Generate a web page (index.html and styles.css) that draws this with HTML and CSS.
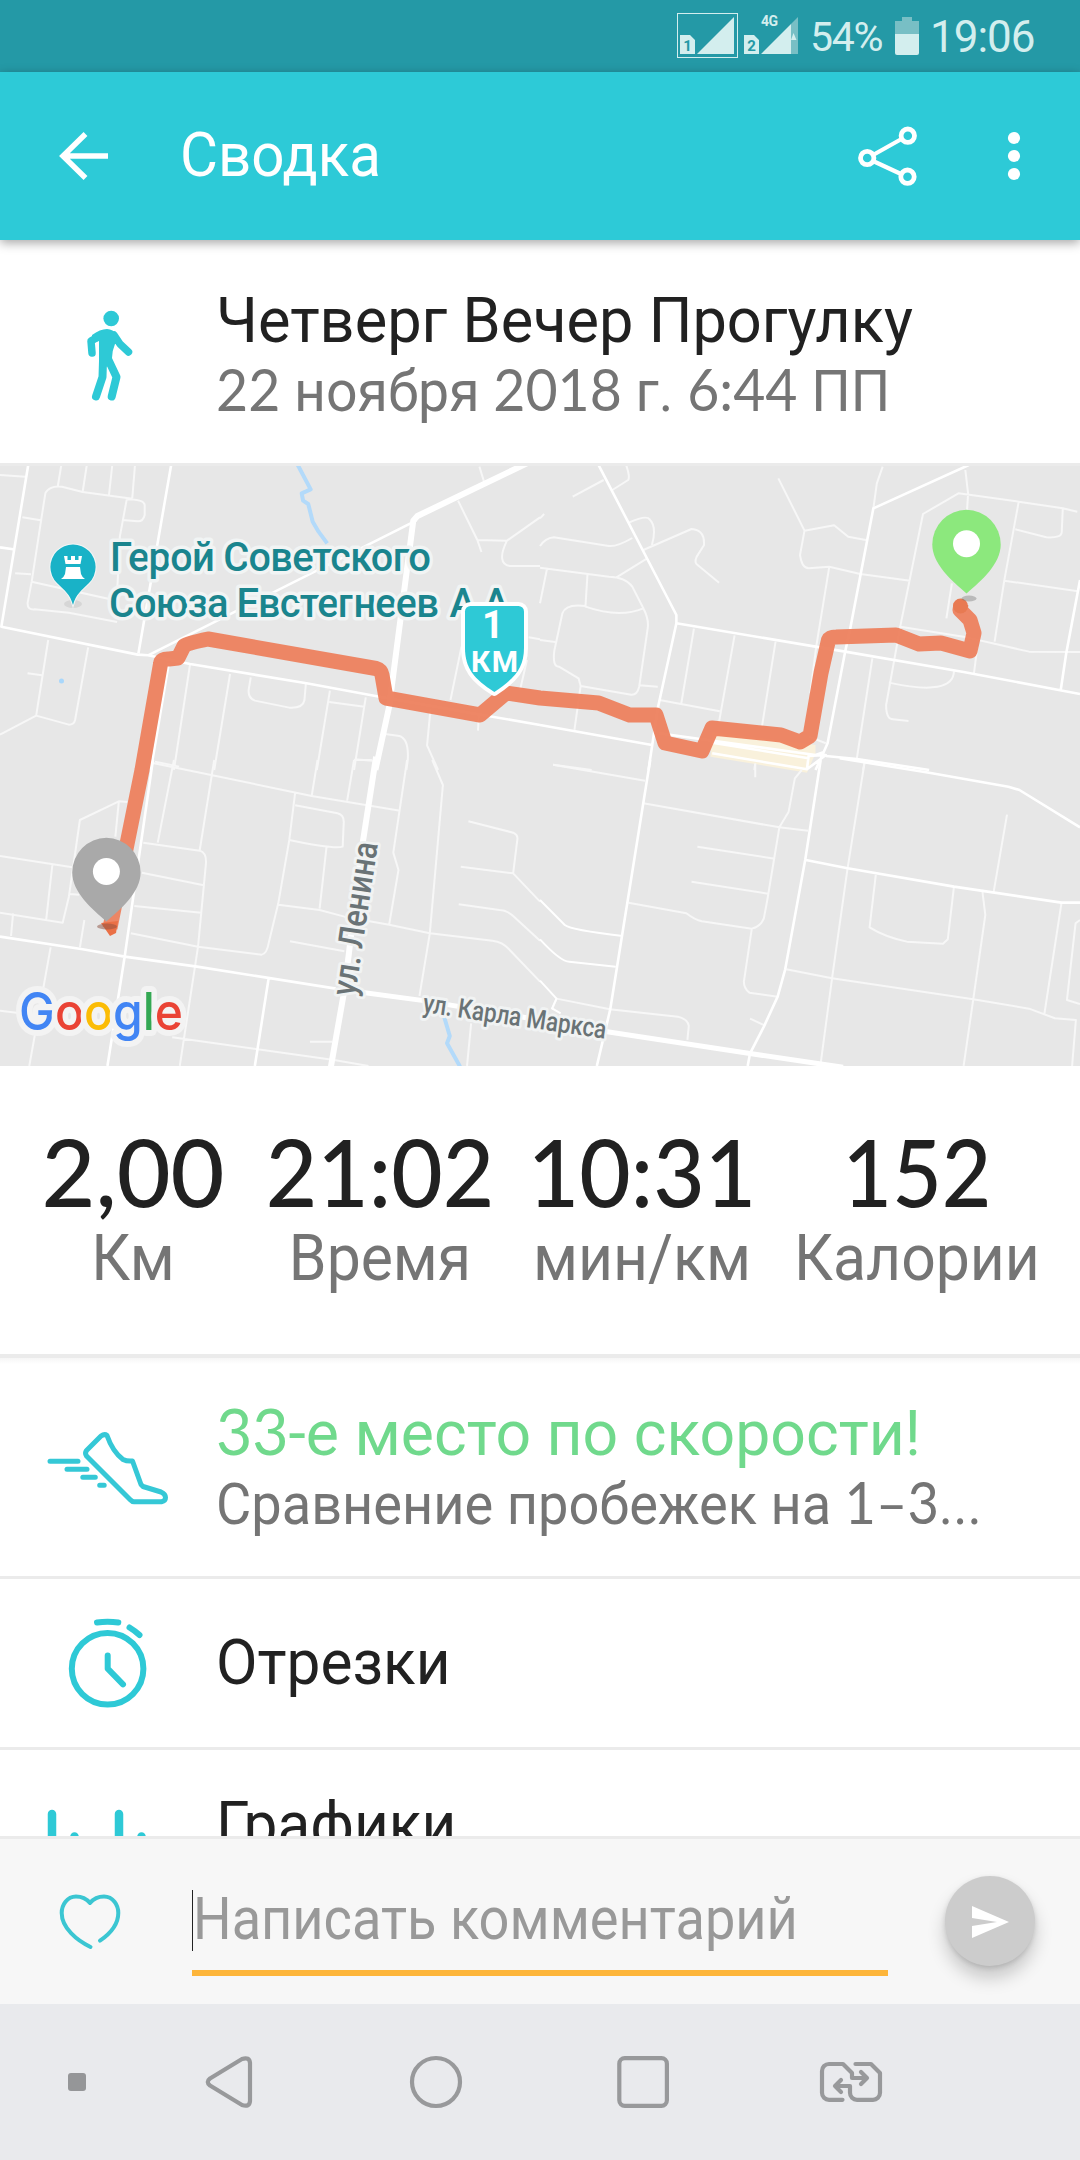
FILE: index.html
```html
<!DOCTYPE html>
<html lang="ru">
<head>
    <meta charset="UTF-8">
    <meta name="viewport" content="width=device-width, initial-scale=1.0">
    <title>Сводка</title>
    <link rel="stylesheet" href="styles.css">
</head>
<body>
    <div class="screen">
        <div class="status-bar">
            <svg class="signals" width="171" height="72" viewBox="640 0 171 72">
                <rect x="678.5" y="13.5" width="60" height="44" fill="none" stroke="#d3eeee"/>
                <path d="M681 35h10l5 5v14h-15zM698 54h37V17zM745 35h10l5 5v14h-15zM762 54h30V24z" fill="#d3eeee"/>
                <path d="M792 24l7-7v37h-7z" fill="#78bfc5"/>
                <path d="M792 40l2.500-7 3 7z" fill="#d3eeee"/>
                <text class="sim" x="688.500" y="51">1</text>
                <text class="sim" x="752.500" y="51">2</text>
                <text class="network" x="762" y="26" textLength="17">4G</text>
            </svg>
            <span class="percent">54%</span>
            <svg width="24" height="38" viewBox="0 0 24 38">
                <path d="M7 0h10v4h7v13H0V4h7z" fill="#78bfc5"/>
                <path d="M0 17h24v19a2 2 0 0 1-2 2H2a2 2 0 0 1-2-2z" fill="#d3eeee"/>
            </svg>
            <span class="clock">19:06</span>
        </div>

        <header class="app-bar">
            <svg width="182" height="168" viewBox="0 0 182 168">
                <path d="M85.500 62L63 84l22.500 22M63 84h45" fill="none" stroke="#fff" stroke-width="5.500"/>
            </svg>
            <h1>Сводка</h1>
            <svg width="240" height="168" viewBox="840 72 240 168">
                <g fill="none" stroke="#fff" stroke-width="4.800">
                    <path d="M873 155l28.500-16M873 161l28 13" stroke-width="4.200"/>
                    <circle cx="907.800" cy="135.700" r="6.700"/>
                    <circle cx="867.200" cy="158" r="6.700"/>
                    <circle cx="907.500" cy="176.700" r="6.700"/>
                </g>
                <g fill="#fff">
                    <circle cx="1014" cy="138" r="6.100"/>
                    <circle cx="1014" cy="156" r="6.100"/>
                    <circle cx="1014" cy="174" r="6.100"/>
                </g>
            </svg>
        </header>

        <main class="content">
            <section class="row summary">
                <svg class="icon" width="218" height="223" viewBox="0 0 218 223">
                    <g fill="none" stroke="#2ec9d6" stroke-width="7.500" stroke-linecap="round" stroke-linejoin="round">
                        <path d="M92 113l-1-12 12-7M114 95l6 9 8.500 8"/>
                        <path d="M103 121l-.5 16-6.500 19.500M108 119l8.500 18-4.800 19.500" stroke-width="8"/>
                    </g>
                    <path d="M92 95q8-6 15-6 6 0 10 6l4 8-6 1q-3 7-3 14l-4 8-5 2-4-5v-22l-7 2z" fill="#2ec9d6"/>
                    <circle cx="111.200" cy="78.500" r="7.800" fill="#2ec9d6"/>
                </svg>
                <div class="row-text">
                    <div class="row-title heading">Четверг Вечер Прогулку</div>
                    <div class="row-sub date"><span class="num">22</span> ноября <span class="num">2018</span> г. <span class="num">6:44</span> ПП</div>
                </div>
            </section>

            <section class="map">
                <svg width="1080" height="600" viewBox="0 0 1080 600">
                    <!-- map is cut in four tiles, each with its own coordinates -->
                    <g class="roads" transform="translate(0 -6) scale(.3444 .3333)">
                        <path class="river" d="M862 10L902 88 876 100 880 122 895 132 908 185 925 215 950 250"/>
                        <path d="M0 45L74 50M178 15L168 78M252 15L240 96M326 15L316 108M392 15L384 115M65 172L118 181M132 98Q145 76 180 80L240 96 384 116M132 98L118 190 92 365M44 340L90 343M368 118L348 230 340 400M368 118Q418 118 420 135V165Q416 184 400 184L354 180M92 365L340 422M92 365L80 430Q80 450 100 448L200 458 340 486"/>
                        <path d="M140 540L105 767 200 794Q215 794 218 780L256 562M105 767L0 824M80 640L122 646M552 612L505 930M668 642L622 930M728 652L722 690Q720 714 740 722L840 743Q880 745 884 720L888 672M958 692L920 930M956 726L1058 740M1062 712L1028 930M1030 898L1082 902M1118 822L1160 828Q1188 838 1184 900L1180 930M1250 748L1240 856 1272 930M1340 560L1308 720M1392 20L1405 64M1330 122L1386 240 1398 276M1386 240L1472 242 1568 172M1472 242Q1440 310 1480 318H1568M1390 765L1388 812M450 905L520 920M1568 538L1535 532M1510 690L1530 600"/>
                        <path class="street" d="M82 15L4 500 400 584 430 586 552 612 890 670 1110 712 1400 765 1568 795M497 15L402 580M0 262L38 268M430 586L1208 182M490 610L438 930"/>
                        <path class="avenue" d="M1530 10L1212 168 1200 182 1145 620 1130 740 1090 930"/>
                    </g>
                    <g class="roads" transform="translate(540 -6) scale(.3444 .3333)">
                        <path class="block" d="M500 815L800 855V880L775 938 495 890z"/>
                        <path d="M250 15Q262 50 256 60L210 90M185 60L95 110M258 188Q310 164 318 178 340 200 325 255M0 258Q15 235 40 232L200 258Q225 260 268 234M300 270L440 207Q480 210 476 256L455 290Q448 306 455 313L520 368M222 352L310 296M0 323L200 350Q250 352 268 380L300 445Q318 480 312 510L288 680Q282 705 265 704L118 678 100 810M20 328L0 430M138 340L132 440Q230 475 300 445M132 438Q75 430 65 460L42 570Q35 620 55 620L112 655 118 678M0 540L44 546M288 676L342 680M0 175L12 162"/>
                        <path d="M447 506L410 732M347 720L522 754M565 526L520 785M684 545L645 797M692 55L768 212 854 196 895 230 950 241M768 212L755 285Q760 325 780 325L840 320 930 342 1075 362M840 320L802 560 785 700M995 20L978 70 968 145M1235 30L1243 100 1240 150M1560 155L1518 145 1390 125 1215 100 1112 162 1046 500 1230 530 1420 575 1568 576M1390 125L1348 362 1320 545M1380 208L1470 232Q1515 235 1515 215L1518 145M1348 362L1562 394M1196 370L1180 475M1046 500L1005 735Q1005 778 1025 778L1070 783M1013 668Q1200 710 1202 634M1270 560L1260 640M965 595L920 895M625 912L622 930M942 910L938 930M38 914L150 930M780 830L830 850"/>
                        <path class="street" d="M170 15L298 270 396 465 396 490 342 745 315 930M396 490L886 575 1230 636 1568 702M1245 15L968 145 950 241 900 510 886 575 835 850 820 885 800 930M1568 360L1528 580 1512 690M0 795L325 855M345 820L800 885 825 876M500 880L775 928 830 885 780 888 775 928M500 848L780 895M830 888L920 897 1130 930"/>
                    </g>
                    <g class="roads" transform="translate(0 294) scale(.3444 .3333)">
                        <path class="river" d="M1290 772L1306 828 1298 850 1336 920"/>
                        <path d="M440 8L860 98 905 108 1162 152M505 0L458 248M622 0L580 270M370 126L345 124 232 180 200 410 182 488 0 458M345 124L335 230M0 288L210 322M152 315L134 480M38 460L32 528M202 402L230 404M245 480L232 562M416 248L580 272Q600 278 598 310L575 560 522 918M412 338L592 376M390 438L584 458M380 520L575 560 760 584Q775 580 780 550L808 430 840 240 857 98M857 136L980 160Q1000 165 998 190L995 260Q970 268 840 240M948 262L928 446M808 434L928 450 1000 470 1130 494 1248 520 1430 542Q1460 545 1480 570L1568 665M842 544L1000 574M922 0L905 108M1028 0L1008 122M1028 0H1080M1182 0L1142 278 1157 330 1130 494M1255 0L1286 75 1248 520 1218 708M147 562L85 918M0 752L60 760M500 832L970 900 1070 918M900 845H965M1360 184L1490 218Q1505 225 1502 240L1490 340M1338 320L1490 340 1568 425M1332 433L1450 450Q1470 450 1490 468L1568 542M1368 790L1356 918"/>
                        <path class="street" d="M444 0L362 590 312 918M0 530L240 568 362 590 572 620 975 686M780 655L740 918"/>
                        <path class="avenue" d="M1092 -10L1050 270 1000 690 960 925"/>
                        <path class="avenue2" d="M1000 690L1230 722 1568 780"/>
                    </g>
                    <g class="roads" transform="translate(540 294) scale(.3444 .3333)">
                        <path d="M38 14L305 62M300 130L695 202 778 212M457 260L682 296M440 365L662 401M257 428L425 460Q450 480 470 484L615 506M760 30L740 55 722 155 695 202 660 420 650 475Q640 500 615 506L592 665Q592 685 608 698L690 710M625 10V52M942 10L893 325 848 655 815 910M975 345L957 502Q1000 530 1065 545L1170 551 1184 538 1202 380M1284 390L1293 465 1258 718 1230 918M1356 164L1317 397M1514 430L1464 765M715 628L848 655 1258 718 1420 746 1495 775 1556 780 1545 918M1568 480L1555 490 1530 720 1568 732M48 716L203 748 400 770Q430 778 432 798L428 840M48 716L35 748M610 776L652 796"/>
                        <path class="bend" d="M0 420L72 495Q90 510 240 528M0 538Q60 605 85 605L220 620M0 662L48 716 35 745 60 760"/>
                        <path class="street" d="M320 0L204 748 165 918M815 0L770 300 712 628 690 710 650 800 610 880 603 918M870 -5L1130 38 1360 80 1392 90 1568 202M772 300L893 325 1202 380 1514 428H1568"/>
                        <path class="avenue2" d="M0 780L200 816 605 880 880 922"/>
                    </g>
                    <circle cx="61.500" cy="215" r="2.500" fill="#a9d7fb"/>

                    <!-- castle poi -->
                    <ellipse cx="73" cy="138" rx="9" ry="4" fill="#d6d6d6"/>
                    <path d="M73 139C70 128 65 125 57 117A22.600 22.600 0 1 1 89 117C81 125 76 128 73 139z" fill="#19b2c7" stroke="#f3f6f6" stroke-width="2" paint-order="stroke"/>
                    <path d="M64 90h3.500v4h3.500v-4h4v4h3.500v-4H82l-1.500 8h-15zM66 101h14l1 7q1 3 4 5H61q3-2 4-5z" fill="#fff"/>
                    <g class="poi-label">
                        <text x="110" y="105" textLength="321">Герой Советского</text>
                        <text x="109" y="151" textLength="330">Союза Евстегнеев</text>
                        <text x="449.500" y="151">А</text>
                        <text x="483" y="151">А</text>
                    </g>
                    <text class="street-label" font-size="35" transform="translate(355 531) rotate(-81.500)" textLength="155" lengthAdjust="spacingAndGlyphs">ул. Ленина</text>
                    <text class="street-label" font-size="27" transform="translate(422 546) rotate(8.300)" textLength="185" lengthAdjust="spacingAndGlyphs">ул. Карла Маркса</text>

                    <path class="route" d="M110 462L142 304 160.500 198Q161 192.500 169 193L178 192 184 180Q188 177 208 173L376 202.500Q381 204 382 209L386 232 480 249 506 227 540 232 598.500 237 629.500 249H656L665 277 702 285 712 262 781 269 800 276 810 270 821 207 828.500 174Q830 171 836 171L896 169 919 178 941 177 970 185 974 167 970 154 960 144 961 138"/>
                    <path d="M101 457l17-2-2 12-6 3z" fill="#ea7046"/>
                    <circle cx="960.500" cy="140" r="7.500" fill="#e87a52"/>

                    <path d="M470.500 140H518.500a5.500 5.500 0 0 1 5.500 5.500V182C524 202 514 213 494.300 226 474 213 465 202 465 182V145.500a5.500 5.500 0 0 1 5.500-5.500z" fill="#2ec9d6" stroke="#fff" stroke-width="8" stroke-linejoin="round" paint-order="stroke"/>
                    <text class="shield" x="493" y="172" font-size="38">1</text>
                    <text class="shield" x="494.500" y="205.500" font-size="30" textLength="47">КМ</text>

                    <ellipse cx="969" cy="132.500" rx="7.500" ry="3" fill="#777" opacity=".4"/>
                    <path d="M966.500 127.500C952 115 932.300 98 932.300 78.500A34.200 34.700 0 0 1 1000.700 78.500C1000.700 98 981 115 966.500 127.500z" fill="#8ce87d"/>
                    <circle cx="966.500" cy="77.700" r="13.500" fill="#fff"/>

                    <ellipse cx="107" cy="460.500" rx="10" ry="3" fill="#8b5040" opacity=".5"/>
                    <path d="M106.400 455.500C92 443 72.200 426 72.200 406.500A34.200 34.700 0 0 1 140.600 406.500C140.600 426 121 443 106.400 455.500z" fill="#a9a9a9"/>
                    <circle cx="106.400" cy="405.500" r="13.500" fill="#fff"/>

                    <text class="google" x="19" y="564" textLength="164" lengthAdjust="spacingAndGlyphs"><tspan fill="#4285f4">G</tspan><tspan fill="#ea4335">o</tspan><tspan fill="#fbbc05">o</tspan><tspan fill="#4285f4">g</tspan><tspan fill="#34a853">l</tspan><tspan fill="#ea4335">e</tspan></text>
                </svg>
            </section>

            <section class="stats">
                <div class="stat"><div class="value distance">2,00</div><div class="label">Км</div></div>
                <div class="stat"><div class="value">21:02</div><div class="label">Время</div></div>
                <div class="stat"><div class="value">10:31</div><div class="label">мин/км</div></div>
                <div class="stat"><div class="value calories">152</div><div class="label">Калории</div></div>
            </section>

            <section class="row rank">
                <svg class="icon" width="218" height="218" viewBox="0 0 218 218">
                    <g fill="none" stroke="#35c8d6" stroke-width="5" stroke-linecap="round" stroke-linejoin="round">
                        <path d="M50 103.300h28M67 111.300h20M82.800 119.300h12.500M99.700 127.300h4.500"/>
                        <path d="M107 77.500C111 89 117 97 123 101.500Q127 103.500 132.500 103L141 126.500 143 128.500 161 134Q165.500 136 165.500 139.500T161.500 143.700H134Q132 143.700 130 141.500L86.500 98Q84.500 95.300 86.500 92.500L101 78Q104.500 75.500 107 77.500z"/>
                    </g>
                </svg>
                <div class="row-text">
                    <div class="row-title green"><span class="num">33</span>-е место по скорости!</div>
                    <div class="row-sub compare">Сравнение пробежек на <span class="num">1–3</span>...</div>
                </div>
            </section>

            <section class="row single">
                <svg class="icon" width="218" height="168" viewBox="0 0 218 168">
                    <g fill="none" stroke="#2ec9d6" stroke-width="6" stroke-linecap="round" stroke-linejoin="round">
                        <circle cx="107.600" cy="89.700" r="35.800"/>
                        <path d="M107.700 76.500v13.200L123 105.300M97 43.500Q107.500 41.800 118.300 43.500M129.500 48.500q5 3 10 7.500"/>
                    </g>
                </svg>
                <div class="row-title item">Отрезки</div>
            </section>

            <section class="row single charts">
                <svg class="icon" width="218" height="168" viewBox="0 0 218 168">
                    <path d="M52 64v60M74.500 86.500v37M119 64v60M141.500 86.500v37" fill="none" stroke="#2ec9d6" stroke-width="8.500" stroke-linecap="round"/>
                </svg>
                <div class="row-title item">Графики</div>
            </section>
        </main>

        <footer class="comment-bar">
            <svg width="192" height="165" viewBox="0 0 192 165">
                <path d="M90 64C85 58 78 57.500 76 57.500 67 57.500 61.700 66 61.700 74 61.700 89 77 101.500 90.500 108M90 64C95 58 102 57.500 104 57.500 113 57.500 118.300 66 118.300 74 118.300 86 109 95.500 100 101.700" fill="none" stroke="#3bc6d2" stroke-width="4" stroke-linecap="round"/>
            </svg>
            <div class="comment-field">
                <div class="caret"><div class="placeholder">Написать комментарий</div></div>
            </div>
            <div class="send">
                <svg width="90" height="90" viewBox="0 0 90 90">
                    <path d="M27 30l37 16-37 16V50l25-4-25-4z" fill="#fff"/>
                </svg>
            </div>
        </footer>

        <nav class="nav-bar">
            <svg width="1080" height="156" viewBox="0 0 1080 156">
                <rect x="68" y="69" width="18" height="18" rx="3" fill="#959698"/>
                <g fill="none" stroke="#98999b" stroke-width="4.200" stroke-linecap="round" stroke-linejoin="round">
                    <path d="M242 55L210 74.500Q205.500 78 210 81.500L242 101Q249.500 103.500 250 97V59Q249.500 52.500 242 55z"/>
                    <circle cx="436" cy="78" r="24"/>
                    <rect x="619.300" y="54.200" width="47.600" height="47.600" rx="5.500"/>
                    <path d="M842.500 95.800H829a7 7 0 0 1-7-7V67a7 7 0 0 1 7-7H843L852 69V74H867M861 68l6 6-6 6"/>
                    <path d="M855.500 60H871L880 69V88.800a7 7 0 0 1-7 7H857a7 7 0 0 1-7-7V82H835M841 76l-6 6 6 6"/>
                </g>
            </svg>
        </nav>
    </div>
</body>
</html>
```
FILE: styles.css
```css
* {
    box-sizing: border-box;
}

body {
    margin: 0;
    font-family: Roboto, sans-serif;
    background: #fff;
    color: #212121;
}

svg {
    display: block;
    flex: none;
}

.screen {
    width: 1080px;
    height: 2160px;
    display: flex;
    flex-direction: column;
    overflow: hidden;
}

/* status bar */
.status-bar {
    height: 72px;
    flex: none;
    display: flex;
    align-items: center;
    padding-right: 46px;
    justify-content: flex-end;
    background: #2499a6;
    color: #d3eeee;
}

.percent {
    font-size: 41px;
    width: 85px;
    letter-spacing: -1.3px;
    white-space: nowrap;
    padding-top: 2px;
}

.clock {
    font-size: 44px;
    width: 104px;
    margin-left: 11px;
    padding-top: 2px;
    letter-spacing: -1px;
}

.sim {
    font: bold 15px Roboto, sans-serif;
    text-anchor: middle;
    fill: #2499a6;
}

.network {
    font: bold 14px Roboto, sans-serif;
    fill: #d3eeee;
}

/* app bar */
.app-bar {
    height: 168px;
    flex: none;
    display: flex;
    align-items: center;
    background: #2dcad7;
    color: #fff;
    box-shadow: 0 3px 10px rgba(0, 0, 0, 0.35);
    position: relative;
    z-index: 1;
}

h1 {
    flex: 1;
    margin: 0 0 0 -2px;
    padding-bottom: 3px;
    font-size: 61px;
    font-weight: 400;
    transform: scaleX(0.956);
    transform-origin: left;
}

/* content */
.content {
    flex: 1;
    min-height: 0;
    overflow: hidden;
}

.row {
    display: flex;
    border-bottom: 3px solid #ebebeb;
}

.icon {
    margin-right: -2px;
}

.row-text {
    padding-top: 46px;
    white-space: nowrap;
}

.row-title,
.row-sub {
    width: max-content;
    line-height: 70px;
    white-space: nowrap;
    transform-origin: left;
}

.row-title {
    font-size: 63px;
}

.row-sub {
    font-size: 58px;
    color: #757575;
}

.heading {
    transform: scaleX(0.973);
}

.date {
    transform: scaleX(0.955);
}

.green {
    color: #70d98c;
    transform: scaleX(0.992);
}

.compare {
    transform: scaleX(0.934);
}

.item {
    transform: scaleX(0.958);
}

.num {
    font-family: Lato, sans-serif;
    line-height: 1;
}

.map {
    height: 600px;
    background: #e7e7e7;
}

.roads path {
    fill: none;
    stroke: #f7f7f7;
    stroke-width: 2;
    stroke-linejoin: round;
    vector-effect: non-scaling-stroke;
}

.roads .street {
    stroke: #fff;
    stroke-width: 2.6;
}

.roads .bend {
    stroke: #fff;
}

.roads .avenue {
    stroke: #fff;
    stroke-width: 6;
}

.roads .avenue2 {
    stroke: #fff;
    stroke-width: 5;
}

.roads .river {
    stroke: #b3dafa;
    stroke-width: 4;
}

.roads .block {
    fill: #f9f1dc;
    stroke: none;
}

.route {
    fill: none;
    stroke: #ed805c;
    stroke-width: 15;
    stroke-linejoin: round;
    opacity: 0.94;
}

.poi-label {
    font: 500 40px Roboto, sans-serif;
    fill: #1a858e;
    stroke: #f1f4f4;
    stroke-width: 7;
    stroke-linejoin: round;
    paint-order: stroke;
}

.street-label {
    font-family: Roboto, sans-serif;
    font-weight: 500;
    fill: #6a7376;
    stroke: #f1f3f3;
    stroke-width: 6;
    stroke-linejoin: round;
    paint-order: stroke;
}

.shield {
    font-family: Roboto, sans-serif;
    font-weight: 700;
    text-anchor: middle;
    fill: #fff;
}

.google {
    font: 500 52px Inter, sans-serif;
    stroke: #f3f3f3;
    stroke-width: 12;
    stroke-linejoin: round;
    paint-order: stroke;
}

/* stats */
.stats {
    height: 292px;
    display: grid;
    grid-template-columns: 248px 246px 278px 272px;
    align-content: start;
    padding: 50px 0 0 9px;
    border-bottom: 4px solid #ebebeb;
    text-align: center;
    white-space: nowrap;
}

.value {
    font-family: Lato, sans-serif;
    font-size: 93px;
    font-weight: 500;
    line-height: 110px;
    transform: scaleX(0.955);
}

.distance {
    transform: none;
}

.calories {
    transform: scaleX(0.92);
}

.label {
    margin-top: 3px;
    font-size: 64px;
    line-height: 60px;
    color: #757575;
    transform: scaleX(0.948);
}

.rank {
    background: linear-gradient(#f6f6f6, #fff 6px);
}

.rank .row-text {
    padding-top: 41px;
}

.single {
    align-items: center;
}

.charts .row-title {
    padding-bottom: 18px;
}

/* comment bar */
.comment-bar {
    height: 168px;
    flex: none;
    display: flex;
    border-top: 3px solid #ebebeb;
    background: #f7f7f7;
}

.comment-field {
    width: 696px;
    height: 137px;
    padding-top: 51px;
    border-bottom: 6px solid #fdb53a;
    color: #999;
}

.caret {
    height: 61px;
    border-left: 1px solid #222;
}

.placeholder {
    font-size: 59px;
    line-height: 58px;
    white-space: nowrap;
    transform: scaleX(0.918);
    transform-origin: left;
}

.send {
    width: 90px;
    height: 90px;
    margin: 37px 0 0 57px;
    border-radius: 50%;
    background: #ccc;
    box-shadow: 0 12px 18px rgba(0, 0, 0, 0.2), 0 2px 5px rgba(0, 0, 0, 0.12);
}

.nav-bar {
    height: 156px;
    flex: none;
    background: #e9eaed;
}
```
